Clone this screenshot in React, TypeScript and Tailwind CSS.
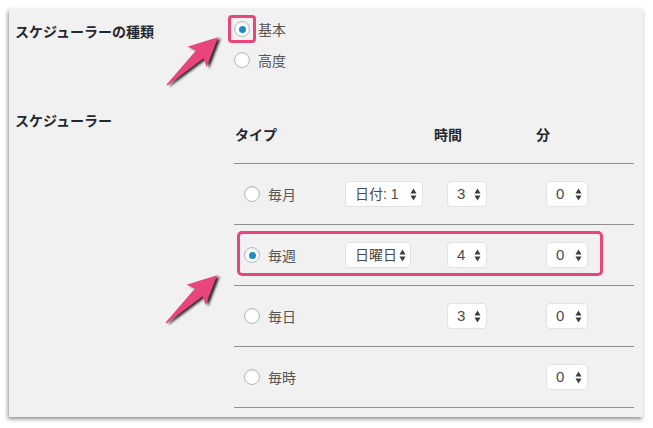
const font = { fontFamily: '"Noto Sans CJK JP", "Liberation Sans", sans-serif' };

function Radio({ checked }: { checked?: boolean }) {
  return (
    <span className="flex size-4 shrink-0 items-center justify-center rounded-full border border-[#b4b9be] bg-white shadow-[inset_0_1px_2px_rgba(0,0,0,0.1)]">
      {checked ? <span className="size-[7px] rounded-full bg-[#1e8cbe]" /> : null}
    </span>
  );
}

function Updown() {
  return (
    <svg width="7" height="13" viewBox="0 0 7 13" className="shrink-0">
      <path d="M3.5 0.5 L6.5 5.5 L0.5 5.5 Z" fill="#3c3c3c" />
      <path d="M3.5 12.5 L6.5 7.5 L0.5 7.5 Z" fill="#3c3c3c" />
    </svg>
  );
}

function Select({ label, width, small }: { label: string; width: string; small?: boolean }) {
  return (
    <span
      className={`flex h-[26px] items-center justify-between gap-[2px] whitespace-nowrap rounded-[4px] border border-[#e2e2e2] bg-white pl-[9px] pr-[5px] text-[#4a4a4a] ${small ? "text-[14px]" : "text-[15px]"} ${width}`}
      style={{ fontFamily: '"Liberation Sans", "Noto Sans CJK JP", sans-serif' }}
    >
      <span>{label}</span>
      <Updown />
    </span>
  );
}

function Arrow() {
  const pts = "0,-0.6 45,-5.5 41,-14 70,0 41,14 45,5.5 0,0.6";
  return (
    <svg width="80" height="70" viewBox="0 0 80 70">
      <defs>
        <filter id="blur" x="-20%" y="-20%" width="140%" height="140%">
          <feGaussianBlur stdDeviation="0.8" />
        </filter>
      </defs>
      <g transform="translate(10,55) rotate(-43)">
        <polygon points={pts} fill="#2a2a2a" transform="translate(1.2,2.6)" filter="url(#blur)" />
        <polygon points={pts} fill="#e8457a" />
      </g>
    </svg>
  );
}

type Row = {
  label: string;
  checked?: boolean;
  day?: { label: string; width: string };
  hour?: string;
  highlight?: boolean;
};

const rows: Row[] = [
  { label: "毎月", day: { label: "日付: 1", width: "w-[78px]" }, hour: "3" },
  { label: "毎週", checked: true, day: { label: "日曜日", width: "w-[66px]" }, hour: "4", highlight: true },
  { label: "毎日", hour: "3" },
  { label: "毎時" },
];

export default function App() {
  return (
    <div className="relative h-[428px] w-[653px] overflow-hidden bg-white p-[9px]" style={font}>
      <div className="flex h-[408px] w-[634px] flex-col bg-[#f1f1f1] pt-[6px] shadow-[-1px_2px_4px_rgba(0,0,0,0.45)]">
        {/* scheduler kind */}
        <div className="flex h-[85px]">
          <div className="w-[219px] shrink-0 pl-[6px] pt-[6px] text-[14px] font-bold leading-[20px] text-[#23282d]">
            スケジューラーの種類
          </div>
          <div className="flex flex-col gap-[7px] text-[14px] leading-[20px] text-[#555]">
            <div className="flex items-center gap-[2px]">
              <span className="flex size-[28px] items-center justify-center rounded-[4px] border-[3px] border-[#e8457a]">
                <Radio checked />
              </span>
              <span>基本</span>
            </div>
            <div className="flex items-center gap-[8px] pl-[6px]">
              <Radio />
              <span>高度</span>
            </div>
          </div>
        </div>

        {/* scheduler */}
        <div className="flex">
          <div className="w-[225px] shrink-0 pl-[6px] pt-[10px] text-[14px] font-bold leading-[20px] text-[#23282d]">
            スケジューラー
          </div>
          <div className="w-[400px]">
            <div className="flex h-[64px] items-start border-b border-[#8f8f8f] pt-[24px] text-[14px] font-bold leading-[20px] text-[#23282d]">
              <span className="w-[200px] pl-[1px]">タイプ</span>
              <span className="w-[102px]">時間</span>
              <span>分</span>
            </div>
            {rows.map((r) => (
              <div key={r.label} className="relative flex h-[61px] items-center border-b border-[#8f8f8f]">
                <div className="flex w-[111px] items-center gap-[8px] pl-[10px] text-[14px] text-[#555]">
                  <Radio checked={r.checked} />
                  <span>{r.label}</span>
                </div>
                <div className="w-[102px]">
                  {r.day ? <Select label={r.day.label} width={r.day.width} small /> : null}
                </div>
                <div className="w-[99px]">{r.hour ? <Select label={r.hour} width="w-[40px]" /> : null}</div>
                <div>
                  <Select label="0" width="w-[42px]" />
                </div>
                {r.highlight ? (
                  <span className="absolute left-[3px] top-[6px] h-[45px] w-[366px] rounded-[5px] border-[3px] border-[#e8457a]" />
                ) : null}
              </div>
            ))}
          </div>
        </div>
      </div>

      <div className="absolute left-[157px] top-[30px]">
        <Arrow />
      </div>
      <div className="absolute left-[156px] top-[268px]">
        <Arrow />
      </div>
    </div>
  );
}
